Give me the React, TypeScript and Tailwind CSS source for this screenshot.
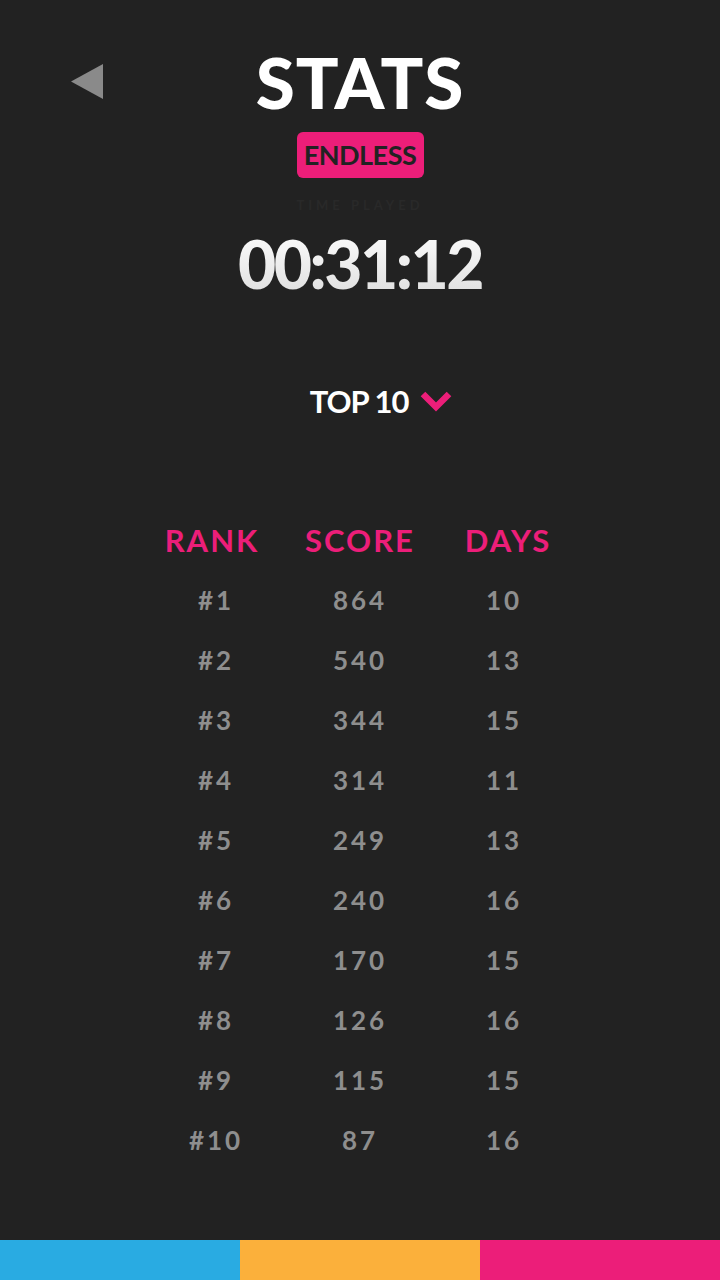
import React from 'react'

const scores = [
  { rank: '#1', score: '864', days: '10' },
  { rank: '#2', score: '540', days: '13' },
  { rank: '#3', score: '344', days: '15' },
  { rank: '#4', score: '314', days: '11' },
  { rank: '#5', score: '249', days: '13' },
  { rank: '#6', score: '240', days: '16' },
  { rank: '#7', score: '170', days: '15' },
  { rank: '#8', score: '126', days: '16' },
  { rank: '#9', score: '115', days: '15' },
  { rank: '#10', score: '87', days: '16' },
]

export default function App() {
  return (
    <div className="flex h-[1280px] w-[720px] flex-col bg-[#222222] font-['Lato',sans-serif]">
      {/* Header */}
      <div className="grid grid-cols-[1fr_auto_1fr] items-start pt-[42px]">
        <button className="ml-[70px] mt-[21px] h-[37px] w-[34px]">
          <svg width="34" height="37" viewBox="0 0 34 37">
            <polygon points="1,18.5 33,1 33,36" fill="#8a8a8a" />
          </svg>
        </button>
        <h1 className="text-[71px] font-black leading-[80px] tracking-[1px] text-white">STATS</h1>
        <div />
      </div>

      <div className="flex justify-center pt-[10px]">
        <span className="flex h-[46px] w-[127px] items-center justify-center rounded-[6px] bg-[#ec1e79] text-[27px] font-bold tracking-[-0.5px] text-[#222222]">
          ENDLESS
        </span>
      </div>

      <div className="mt-[18px] flex justify-center text-[13px] font-bold tracking-[4px] text-[#292929]">TIME PLAYED</div>

      {/* Timer */}
      <div className="mt-[8px] flex justify-center">
        <span className="bg-gradient-to-b from-white to-[#dcdcdc] bg-clip-text text-[66px] font-black leading-[80px] tracking-[-2.5px] text-transparent">
          00:31:12
        </span>
      </div>

      {/* Top 10 selector */}
      <button className="ml-[42px] mt-[74px] flex items-center justify-center gap-[12px] self-center text-[31px] font-bold tracking-[-1px] text-white">
        TOP 10
        <svg width="32" height="22" viewBox="0 0 32 22">
          <polyline points="3,4 16,17 29,4" fill="none" stroke="#ec1e79" strokeWidth="6.5" />
        </svg>
      </button>

      {/* Table */}
      <div className="mt-[96px] flex flex-col items-center">
        <div className="grid grid-cols-[148px_148px_148px] text-center text-[31px] font-bold leading-[40px] tracking-[2px] text-[#ec1e79]">
          <span>RANK</span>
          <span>SCORE</span>
          <span>DAYS</span>
        </div>
        <div className="mt-[10px] flex flex-col">
          {scores.map((s) => (
            <div
              key={s.rank}
              className="grid h-[60px] grid-cols-[148px_148px_148px] items-center text-center text-[26px] font-bold tracking-[3px] text-[#8e8e8e]"
            >
              <span className="pl-[8px]">{s.rank}</span>
              <span>{s.score}</span>
              <span className="pr-[8px]">{s.days}</span>
            </div>
          ))}
        </div>
      </div>

      {/* Bottom colour bar */}
      <div className="mt-auto grid h-[40px] grid-cols-3">
        <div className="bg-[#29abe2]" />
        <div className="bg-[#fbb03b]" />
        <div className="bg-[#ec1e79]" />
      </div>
    </div>
  )
}
